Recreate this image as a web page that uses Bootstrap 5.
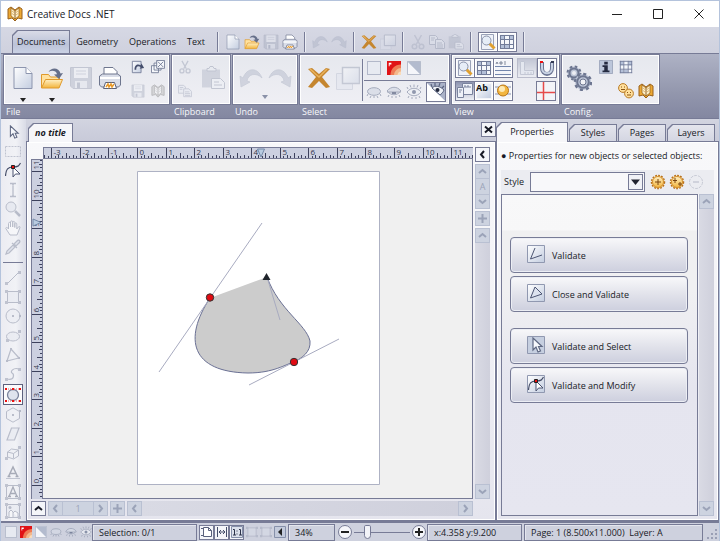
<!DOCTYPE html>
<html lang="en">
<head>
<meta charset="utf-8">
<meta name="viewport" content="width=device-width, initial-scale=1">
<title>Creative Docs .NET</title>
<link rel="stylesheet" href="https://cdn.jsdelivr.net/npm/bootstrap@5.3.0/dist/css/bootstrap.min.css">
<style>
:root{--ink:#777b96;--dark:#5d617d;--pane:#d1d3e0;--paper:#f5f5f8;--soft:#ebecf1}
body{font:9px/14px "Open Sans","Noto Sans",sans-serif;color:#181a26;background:var(--pane)}
.app{min-height:100vh;height:100vh;border-left:1px solid #b4c3dc;border-top:1px solid #b4c3dc;border-right:1px solid #b4c3dc}
svg{display:block;flex:none}
button{font:inherit;color:inherit;padding:0;border:0;background:none;display:flex;align-items:center;justify-content:center;flex:none}
.titlebar{height:26px;background:#fff;padding:0 15px 0 6px}
.titlebar h1{font-size:10px;line-height:16px}
.menubar{height:26px;background:linear-gradient(#d6d8e4,#cfd1de);padding-left:11px;padding-top:3px}
.menubar .menu-tab{height:23px;padding:0 5px;margin-right:1px}
.ctab{position:relative;isolation:isolate;display:flex;align-items:center;justify-content:center;color:inherit;text-decoration:none}
.ctab::before,.ctab::after{content:"";position:absolute;z-index:-1;clip-path:polygon(5px 0,100% 0,100% 100%,0 100%,0 5px)}
.ctab::before{inset:0;background:var(--ink)}
.ctab::after{inset:1px 1px 0 1px;background:var(--fill,#dfe0e9)}
.plain{color:inherit;text-decoration:none;display:flex;align-items:center;justify-content:center}
.vsep{width:2px;height:20px;background:linear-gradient(90deg,var(--ink) 50%,#eceef4 50%);flex:none;margin:0 6px}
.run{display:flex;align-items:center;gap:3px}
.i14{width:14px;height:14px}.i16{width:16px;height:16px}.i24{width:24px;height:24px}.i12{width:12px;height:12px}
.off{opacity:.28}
.faint{opacity:.4}
.mid{opacity:.75}
.box{width:20px;height:20px;border:1px solid var(--ink);background:#f4f5f9;box-shadow:inset 0 0 0 1px #fff}
.box.on{background:linear-gradient(#8d94b0,#eef0f6);box-shadow:none}
.box+.box{margin-left:-1px}
.ribbon{height:66px;background:linear-gradient(#aeb2c5,#9397ad 60%,#8387a1);border-top:1px solid var(--ink);border-bottom:1px solid var(--ink);padding:0 0 0 2px;gap:1px}
.group-body{height:51px;border:1px solid var(--ink);outline:1px solid #fff;outline-offset:-2px;background:linear-gradient(#e6e8ee,#efeff4)}
.group-name{color:#f6f7fa;line-height:13px;padding-left:3px}
.big{width:29px;height:46px;flex-direction:column;padding-top:11px;justify-content:flex-start}
.rule{border-top:1px solid var(--ink)}
.tools{width:25px;background:linear-gradient(90deg,#ececf2,#f1f2f6 60%,#d9dbe6);padding-top:3px}
.tools button{flex:1 1 0;min-height:0;width:20px;margin-left:2px}
.tools .on{border:1px solid var(--dark);background:#fbfbfd}
.tools hr{margin:5px 0 5px 2px;width:20px;height:1px;border:0;background:var(--ink);opacity:1}
.tabrow{height:22px;background:linear-gradient(#d2d4e0,#c8cad9)}
.pane{background:linear-gradient(#f8f8fa,#f3f3f7 40%,#e5e5ee);border:1px solid var(--ink);box-shadow:inset 0 0 0 1px #fff}
.doc-tab{width:45px;height:19px;font-weight:700;font-style:italic;--fill:#f6f6f9;margin-bottom:-1px;z-index:1}
.side-tab{width:48px;height:17px;--fill:linear-gradient(#e4e5ed,#d4d6e2)}
.side-tab.on{width:72px;height:20px;--fill:#f6f6f9;margin-bottom:-1px;z-index:1}
.sq{width:15px;height:15px;border:1px solid var(--ink);background:#f4f5f9}
.sb{width:15px;height:15px;border:1px solid #b9c0d2;background:#cdd3e0;color:#9ba3b8}
.track{background:linear-gradient(90deg,#d9dae4,#cfd0dc)}
.ruler{background:#ccd0e0;border:1px solid var(--ink);min-width:0;min-height:0}
.ruler text{font:8px "Open Sans","Noto Sans",sans-serif;fill:#34374c}
.canvas{background:#f0f0f0;border-right:1px solid var(--ink);border-bottom:1px solid var(--ink);min-height:0;min-width:0}
.side{width:223px}
.stylebar{background:#ebecf1;height:24px;padding-left:3px}
.stylebar select{width:115px;height:20px;min-height:0;padding:0 20px 0 4px;margin-right:2px;font-size:9px;line-height:14px;border:1px solid var(--ink);border-radius:0;background:#f8f8fa url("data:image/svg+xml,%3Csvg xmlns='http://www.w3.org/2000/svg' viewBox='0 0 15 16'%3E%3Crect x='.5' y='.5' width='14' height='15' fill='%23f0f1f6' stroke='%23777b96'/%3E%3Cpath d='M3 5.500h9L7.500 11z' fill='%2320222e'/%3E%3C/svg%3E") no-repeat right 1px center/15px 16px;appearance:none}
.stylebar button{margin-left:3px}
.list{border:1px solid var(--ink);background:linear-gradient(#f8f8f9 0,#f7f7f8 35px,#f0f0f1 36px,#f0f0f2 30%,#e5e5ef 60%,#e6e6f0);padding:42px 9px 0 8px}
.action{height:36px;width:100%;justify-content:flex-start;padding-left:16px;gap:7px;border:1px solid var(--ink);border-radius:4px;background:linear-gradient(#f8f8fa,#e2e3eb 50%,#cdcfde);box-shadow:inset 0 0 0 1px #eceef4;margin-bottom:3px;padding-top:2px}
.action svg{width:18px;height:18px;margin-bottom:4px}
.status{height:20px;border-top:2px solid var(--ink);background:#ced1de;padding-left:2px}
.field{border:1px solid var(--ink);height:17px;padding-left:6px;line-height:15px;box-shadow:inset 1px 1px #e4e6ee;white-space:nowrap}
.zoomer{width:56px;height:16px;appearance:none;background:linear-gradient(var(--ink),var(--ink)) center/100% 1px no-repeat;margin:0 2px}
.zoomer::-webkit-slider-thumb{appearance:none;width:7px;height:14px;border:1px solid var(--ink);border-radius:2px 2px 4px 4px;background:#f2f3f8}
</style>
<script src="https://cdn.jsdelivr.net/npm/bootstrap@5.3.0/dist/js/bootstrap.bundle.min.js"></script>
</head>
<body>
<svg width="0" height="0" class="position-absolute" aria-hidden="true">
<defs>
<linearGradient id="gp" x2="1" y2="1"><stop offset="0" stop-color="#fff"/><stop offset="1" stop-color="#c3cde0"/></linearGradient>
<linearGradient id="go" x2="0" y2="1"><stop offset="0" stop-color="#fff0c4"/><stop offset="1" stop-color="#f2b43c"/></linearGradient>
<symbol id="new" viewBox="0 0 24 24"><path d="M3 1.500h12l6 6v15H3z" fill="url(#gp)" stroke="#8c95ae"/><path d="M15 1.500v6h6" fill="#fff" stroke="#8c95ae"/></symbol>
<symbol id="open" viewBox="0 0 24 24"><path d="M1.500 22V8.500h7l2 2.500h9v3" fill="#ffe2a0" stroke="#e09a2c"/><path d="M1.500 22l4-8.500h17L19 22z" fill="url(#go)" stroke="#e09a2c"/><path d="M8.500 6C11 1 19 1 20.500 7.500l2.500-.5-4 6-5-4.500 3-.3C16 4.500 12 4 8.500 6z" fill="#66708a"/></symbol>
<symbol id="save" viewBox="0 0 24 24"><path d="M1.500 1.500h21v21H4l-2.500-2.500z" fill="#a4abbd" stroke="#8c93a8"/><path d="M5 2h14v10H5z" fill="#f0f2f7"/><path d="M7 5h10M7 8h10" stroke="#aab0c2"/><path d="M6 15h12v7H6z" fill="#dfe3ec"/><path d="M8 16.500h3V22H8z" fill="#868ea6"/></symbol>
<symbol id="print" viewBox="0 0 24 24"><path d="M6 9V1.500h9l4 4V9" fill="#fff" stroke="#6e768e"/><path d="M1.500 10l3-2h15l3 2v9l-2 2h-17l-2-2z" fill="#d9dde8" stroke="#6e768e"/><path d="M2 12h20" stroke="#fff" stroke-width="2"/><path d="M5.500 22.500l2-6h9l2 6z" fill="#fff" stroke="#5c6278"/><path d="M8 21l2-3 1 3 2-3 1 3 2-3" fill="none" stroke="#e79a2b" stroke-width="1.500"/></symbol>
<symbol id="reopen" viewBox="0 0 16 16"><path d="M1.500 1.500h10v13h-10z" fill="url(#gp)" stroke="#747d98"/><path d="M4 11c0-6 4-7 7-5l1-2 3 5-5 1 1-2C8 6.500 6 7 6 11z" fill="#454e6c"/></symbol>
<symbol id="closeall" viewBox="0 0 16 16"><g fill="#f6f8fc" stroke="#707994"><path d="M.5 6.500h8v8h-8zM3.500 3.500h8v8h-8z"/><path d="M6.500.5h9v9h-9z"/><path d="M8 2l6 6M14 2L8 8"/></g></symbol>
<symbol id="book" viewBox="0 0 16 16"><path d="M1 3l3-2 4 3 4-3 3 2v10l-4-1-3 3-3-3-4 1z" fill="#eda934" stroke="#99611c"/><path d="M4 2v8l4 3 4-3V2L8 5z" fill="#fff3cf" stroke="#9a6720" stroke-width=".8"/><path d="M8 5v8" stroke="#8a5a1c"/><path d="M5 5l2 1.500M11 5L9 6.500M5 7.500L7 9M11 7.500L9 9" stroke="#d09a45" stroke-width=".7"/></symbol>
<symbol id="scissors" viewBox="0 0 16 16"><path d="M4.500 1l5 9M11.500 1l-5 9" stroke="#8c94aa" stroke-width="1.500"/><g fill="none" stroke="#8c94aa" stroke-width="1.500"><circle cx="4.500" cy="12.500" r="2.300"/><circle cx="11.500" cy="12.500" r="2.300"/></g></symbol>
<symbol id="copy" viewBox="0 0 16 16"><g fill="#e5e9f2" stroke="#8c94aa"><path d="M.5 1.500h6l2 2v7h-8z"/><path d="M6.500 5.500h6l3 3v6h-9z"/></g><path d="M2 4h4M2 6h3M8 9h5M8 11h6M8 13h6" stroke="#8c94aa"/></symbol>
<symbol id="paste" viewBox="0 0 24 24"><path d="M1 3.500h18v18H1z" fill="#aab0c1"/><path d="M6 5V2.500h2L9 .5h3l1 2h2V5z" fill="#e7eaf1" stroke="#868ea4"/><path d="M10.500 12.500h9l4 4v6h-13z" fill="#eef1f7" stroke="#868ea4"/><path d="M13 16h5M13 19h8" stroke="#868ea4"/></symbol>
<symbol id="undo" viewBox="0 0 24 24"><path d="M1 10l1 11 9-5-3-1c1-7 9-9 15-3C19 1 8 1 4 12z" fill="#a8afc2" stroke="#8e96ac" stroke-width=".7"/></symbol>
<symbol id="redo" viewBox="0 0 24 24"><path d="M23 10l-1 11-9-5 3-1C15 8 7 6 1 12 5 1 16 1 20 12z" fill="#a8afc2" stroke="#8e96ac" stroke-width=".7"/></symbol>
<symbol id="cross" viewBox="0 0 24 24"><path d="M1 3l4-1 7 6 7-6 4 1-8 8 8 10-4 1-7-7-7 7-4-1 8-10z" fill="#c5862f"/><path d="M3 3l9 8 8-8M3 3l4 3" stroke="#e9b25c" stroke-width="1.500" fill="none"/></symbol>
<symbol id="dup" viewBox="0 0 24 24"><path d="M.5 7.500h16v16H.5z" fill="#dfe3ee" stroke="#b3bacb"/><path d="M6.500 1.500h17v16h-17z" fill="url(#gp)" stroke="#8c94aa" stroke-width="1.500"/></symbol>
<symbol id="lens" viewBox="0 0 16 16"><path d="M1.500.5h12v15h-12z" fill="#eef1f8" stroke="#9aa2b8"/><path d="M9 9l5.500 5.500" stroke="#e0a030" stroke-width="3"/><circle cx="6.500" cy="6.500" r="4.500" fill="#e6edf7" stroke="#8a93aa"/></symbol>
<symbol id="grid" viewBox="0 0 16 16"><path d="M1 1h14v14H1z" fill="#f5f7fb"/><path d="M1 1h4v5H1zM6 11h4v4H6zM11 1h4v5h-4zM1 11h4v4H1z" fill="#b4c0d8"/><path d="M1.500 1v14M5.500 1v14M10.500 1v14M14.500 1v14M1 1.500h14M1 5.500h14M1 10.500h14M1 14.500h14" stroke="#727c99"/></symbol>
<symbol id="lines" viewBox="0 0 16 16"><path d="M0 6.500h16M0 10.500h16M0 14.500h16" stroke="#7487ad"/><path d="M1 4l1-2 1 2M5 2h2v2H5zM9 2h2M9 4h2" stroke="#666e86" fill="none" stroke-width=".8"/></symbol>
<symbol id="angle" viewBox="0 0 16 16"><path d="M1.500 1.500h4v9h9v4h-13z" fill="#dfe5f0" stroke="#8b94ac"/><path d="M6 12v2M9 12v2M12 12v2" stroke="#8b94ac"/></symbol>
<symbol id="magnet" viewBox="0 0 16 16"><path d="M3 2v6c0 8 10 8 10 0V2" fill="none" stroke="#6a7391" stroke-width="4"/><path d="M3 3v5c0 7 10 7 10 0V3" fill="none" stroke="#c8d2e4" stroke-width="2"/><path d="M1 1h3v2H1z" fill="#e11"/><path d="M12 1h3v2h-3z" fill="#333a55"/></symbol>
<symbol id="pages" viewBox="0 0 16 16"><g fill="#eef1f8" stroke="#7a839e"><path d="M5.500.5h10v11h-10z"/><path d="M.5 4.500h6v10h-6z"/></g><path d="M7 4h7M8 2v2M11 2v2M2 7h3M2 9h2" stroke="#7a839e"/></symbol>
<symbol id="ab" viewBox="0 0 16 16"><path d="M1 1h14v14H1z" fill="url(#gp)"/><text x="0" y="8" font-size="9" font-weight="bold" font-family="Open Sans" fill="#111">Ab</text></symbol>
<symbol id="ball" viewBox="0 0 16 16"><path d="M0 4h16M0 11h16" stroke="#8b94ac"/><circle cx="8" cy="7.500" r="5.500" fill="#f2b640" stroke="#b97616"/><circle cx="7" cy="6" r="3" fill="#fde9b4"/></symbol>
<symbol id="redcross" viewBox="0 0 18 18"><path d="M0 0h18v18H0z" fill="#f3f4f8"/><path d="M6.500 0v18M0 10.500h18" stroke="#e64a4a" stroke-width="1.500"/></symbol>
<symbol id="blank" viewBox="0 0 16 16"><path d="M.5.5h15v15H.5z" fill="#e7eaf1" stroke="#b2b8c9" stroke-width="1.300"/></symbol>
<symbol id="redgrad" viewBox="0 0 16 16"><path d="M0 0h16v16H0z" fill="#e01216"/><path d="M4 16C4 9 9 4 16 4v12z" fill="#ef7b55"/><path d="M8 16c0-4 4-8 8-8v8z" fill="#f3b88c"/><path d="M12 16c0-2 2-4 4-4v4z" fill="#f8dcbb"/><path d="M2 2h3v2H3v2H2z" fill="#fff"/></symbol>
<symbol id="half" viewBox="0 0 16 16"><path d="M.5.5h15v15H.5z" fill="#f5f6fa" stroke="#aab1c4"/><path d="M1 1h14v14z" fill="#b3bbce"/></symbol>
<symbol id="eye0" viewBox="0 0 16 16"><ellipse cx="8" cy="7.500" rx="6.500" ry="3.800" fill="#d5dae5" stroke="#8c94aa"/><path d="M2 10l-1 2M5 12l-1 2M8 12v2M11 12l1 2M14 10l1 2" stroke="#8c94aa"/></symbol>
<symbol id="eye1" viewBox="0 0 16 16"><path d="M1 7c4-5 10-5 14 0-4 5-10 5-14 0z" fill="#d5dae5" stroke="#8c94aa"/><path d="M1 8h14" stroke="#8c94aa"/><path d="M6 8h4v2H6z" fill="#606a86"/><path d="M3 11l-1 2M6 12v2M10 12v2M13 11l1 2" stroke="#8c94aa"/></symbol>
<symbol id="eye2" viewBox="0 0 16 16"><path d="M1 8c4-5 10-5 14 0-4 5-10 5-14 0z" fill="#eef0f5" stroke="#8c94aa"/><circle cx="8" cy="8" r="2" fill="#737d98"/><path d="M2 5L1 3M5 3.500L4 1M8 3V.5M11 3.500L12 1M14 5l1-2M3 12l-1 2M6 13v2M10 13v2M13 12l1 2" stroke="#8c94aa"/></symbol>
<symbol id="eyehalf" viewBox="0 0 18 18"><path d="M0 0h18v18z" fill="#aab2c8"/><path d="M0 0v18h18z" fill="#fff"/><path d="M5 5c3-3 8-2 12 2-1 3-3 4-4 5z" fill="#eef1f7" stroke="#5b6480"/><circle cx="10.500" cy="7" r="2" fill="#242a3e"/><path d="M5 4L4 1M8 3V0M12 3l1-3M15 5l2-2" stroke="#5b6480" stroke-width="1.200"/></symbol>
<symbol id="gears" viewBox="0 0 26 26"><g fill="#bcc4d6" stroke="#6d7690"><circle cx="8" cy="8" r="6.500" stroke-width="2" stroke-dasharray="2.600 2.500"/><circle cx="8" cy="8" r="4.500" stroke-width="2"/><circle cx="17" cy="17" r="8" stroke-width="2.500" stroke-dasharray="3 3.280"/><circle cx="17" cy="17" r="5.800" stroke-width="2"/></g><circle cx="8" cy="8" r="2" fill="#eceef4"/><circle cx="17" cy="17" r="3" fill="#f1f2f6" stroke="#6d7690"/></symbol>
<symbol id="info" viewBox="0 0 16 16"><path d="M.5.5h15v15H.5z" fill="#bcc6da" stroke="#99a2b9"/><path d="M6 2h4v3H6zM4 6h6v6h2v2H4v-2h2V8H4z" fill="#242a40"/></symbol>
<symbol id="faces" viewBox="0 0 16 16"><g fill="#ffdf9c" stroke="#b97a24"><circle cx="5" cy="5" r="4.400"/><circle cx="11" cy="10.500" r="4.400"/></g><path d="M3 4h1M6 4h1M3 6.500h4M9 9.500h1M12 9.500h1M9 12h4" stroke="#8b5412"/></symbol>
<symbol id="arrow" viewBox="0 0 16 16"><path d="M5 1v12l3-3 2 5 2.500-1-2-4.500H14z" fill="#f6f8fc" stroke="#5f6882" stroke-width="1.200"/></symbol>
<symbol id="marq" viewBox="0 0 16 16"><path d="M.5 3.500h15v10H.5z" fill="none" stroke="#7c849c" stroke-dasharray="2 1"/></symbol>
<symbol id="edit" viewBox="0 0 16 16"><path d="M.5 14C1 7 3 5 8 5s6-1 7.500-4" fill="none" stroke="#454d68" stroke-width="1.200"/><path d="M8 5v10l2.500-3H15z" fill="#fff" stroke="#4a5270"/><path d="M6.500 3.500h3v3h-3z" fill="#e11" stroke="#222"/></symbol>
<symbol id="ibeam" viewBox="0 0 16 16"><path d="M5 1.500h2.500L8 3l.5-1.500H11M5 14.500h2.500L8 13l.5 1.500H11M8 2v12" fill="none" stroke="#68718b" stroke-width="1.300"/></symbol>
<symbol id="zoomt" viewBox="0 0 16 16"><circle cx="6" cy="6" r="5" fill="#dce1ec" stroke="#68718b"/><path d="M10 10l5 5" stroke="#68718b" stroke-width="2.500"/></symbol>
<symbol id="hand" viewBox="0 0 16 16"><path d="M5 15L.8 8.500c0-1.500 1.500-1.500 2.700.5V3.500c0-1.500 2-1.500 2 0V7 2c0-1.500 2.200-1.500 2.200 0v5-4.500c0-1.500 2.100-1.500 2.100 0V7.500 4c0-1.500 2-1.500 2 0v5l1.500-2c1-1 2.200-.5 1.500 1L12 15z" fill="#fff" stroke="#68718b"/></symbol>
<symbol id="drop" viewBox="0 0 16 16"><path d="M1 15l1-3 6-6 2 2-6 6zM7 4l5 5M9 5l3-3c2-2 4 0 2 2l-3 3z" fill="#c9d0df" stroke="#68718b" stroke-width="1.200"/></symbol>
<symbol id="line" viewBox="0 0 16 16"><path d="M2 14L14 2" stroke="#68718b"/><path d="M0 12h3v3H0zM13 1h3v3h-3z" fill="#7c849c"/></symbol>
<symbol id="rect" viewBox="0 0 16 16"><path d="M2.500 2.500h11v11h-11z" fill="#e3e7f0" stroke="#68718b"/><path d="M0 1h3v3H0zM13 1h3v3h-3zM0 12h3v3H0zM13 12h3v3h-3z" fill="#7c849c"/></symbol>
<symbol id="circ" viewBox="0 0 16 16"><circle cx="8" cy="8" r="7" fill="#e9ecf3" stroke="#68718b"/><path d="M7 7h2v2H7zM14 7h2v2h-2z" fill="#68718b"/></symbol>
<symbol id="ell" viewBox="0 0 16 16"><ellipse cx="8" cy="8.500" rx="6.500" ry="4.500" fill="#e3e7f0" stroke="#68718b"/><path d="M1 11h3v3H1zM13 2h3v3h-3z" fill="#7c849c"/></symbol>
<symbol id="tri" viewBox="0 0 16 16"><path d="M6 2L2 14l12-3z" fill="#eef0f5" stroke="#68718b" stroke-width="1.200"/><path d="M5 1h2v2H5zM1 13h2v2H1zM13 10h2v2h-2z" fill="#68718b"/></symbol>
<symbol id="curve" viewBox="0 0 16 16"><path d="M2 13c8 2 7-5 5-6S8 1 14 3" fill="none" stroke="#68718b" stroke-width="1.200"/><path d="M0 12h3v3H0zM13 2h3v3h-3z" fill="#7c849c"/></symbol>
<symbol id="ellred" viewBox="0 0 16 16"><circle cx="8" cy="8" r="5.500" fill="#dfe4ee" stroke="#7a839c" stroke-width="1.300"/><path d="M1 2h14M1 14h14" stroke="#d66" stroke-dasharray="1 1"/><path d="M0 1h2v2H0zM7 1h2v2H7zM14 1h2v2h-2zM0 13h2v2H0zM7 13h2v2H7zM14 13h2v2h-2z" fill="#e11"/></symbol>
<symbol id="hex" viewBox="0 0 16 16"><path d="M8 .8l6.500 3.700v7L8 15.200l-6.500-3.700v-7z" fill="#eef0f5" stroke="#68718b"/><path d="M7 7h2v2H7zM14 3h2v2h-2z" fill="#68718b"/></symbol>
<symbol id="para" viewBox="0 0 16 16"><path d="M2 14L6.500 2H14L9.500 14z" fill="#e3e7f0" stroke="#68718b" stroke-width="1.200"/></symbol>
<symbol id="cube" viewBox="0 0 16 16"><path d="M2.500 7l4-3 7 1v6l-5 3-6-2zM2.500 7l6 1.500v5M8.500 8.500l5-3.500" fill="#eef0f5" stroke="#68718b"/><path d="M0 12h3v3H0zM13 1h3v3h-3z" fill="#7c849c"/></symbol>
<symbol id="atext" viewBox="0 0 16 16"><path d="M3.500 11.500L8 2l4.500 9.500M5 8.500h6M2.500 11.500h3M10.500 11.500h3" fill="none" stroke="#3d455e" stroke-width="1.500"/><path d="M1 13.500h14" stroke="#7c849c"/></symbol>
<symbol id="abox" viewBox="0 0 16 16"><path d="M1.500 1.500h13v13h-13z" fill="none" stroke="#68718b"/><path d="M4 12.500L8 3l4 9.500M5 9.500h6M3 12.500h3M10 12.500h3" fill="none" stroke="#3d455e" stroke-width="1.300"/><path d="M0 0h3v3H0zM13 0h3v3h-3zM0 13h3v3H0zM13 13h3v3h-3z" fill="#7c849c"/></symbol>
<symbol id="img" viewBox="0 0 16 16"><path d="M1.500 1.500h13v13h-13z" fill="#e3e7f0" stroke="#68718b"/><path d="M4 14V9l2-2 2 2v5M8 10l2-2 3 2v4" fill="#fff" stroke="#68718b"/><circle cx="5" cy="4.500" r="1.500" fill="#68718b"/><path d="M0 0h3v3H0zM13 0h3v3h-3zM0 13h3v3H0zM13 13h3v3h-3z" fill="#7c849c"/></symbol>
<symbol id="up" viewBox="0 0 9 9"><path d="M1 6l3.500-3L8 6" fill="none" stroke="currentColor" stroke-width="2"/></symbol>
<symbol id="down" viewBox="0 0 9 9"><path d="M1 3l3.500 3L8 3" fill="none" stroke="currentColor" stroke-width="2"/></symbol>
<symbol id="left" viewBox="0 0 9 9"><path d="M6 1L3 4.500 6 8" fill="none" stroke="currentColor" stroke-width="2"/></symbol>
<symbol id="right" viewBox="0 0 9 9"><path d="M3 1l3 3.500L3 8" fill="none" stroke="currentColor" stroke-width="2"/></symbol>
<symbol id="plus" viewBox="0 0 9 9"><path d="M4.500 0v9M0 4.500h9" stroke="currentColor" stroke-width="2"/></symbol>
<symbol id="x" viewBox="0 0 9 9"><path d="M1 1.500l7 6M8 1.500l-7 6" stroke="currentColor" stroke-width="2"/></symbol>
<symbol id="cog" viewBox="0 0 16 16"><circle cx="8" cy="8" r="6.500" fill="#ffe3a0" stroke="#b8701c" stroke-width="1.500" stroke-dasharray="1.800 1.200"/><circle cx="8" cy="8" r="5.500" fill="url(#go)" stroke="#d08c2c"/></symbol>
<symbol id="fpage" viewBox="0 0 12 12"><path d="M2.500 1.500h5l3 3v6h-8z" fill="#fff" stroke="#59617c"/><path d="M7.500 1.500v3h3M0 2.500h2M0 9.500h2" fill="none" stroke="#59617c"/></symbol>
<symbol id="fwidth" viewBox="0 0 12 12"><path d="M1.500 1v10M10.500 1v10M3 6h6M3 6l2-2M3 6l2 2M9 6L7 4M9 6L7 8" stroke="#454e6a" fill="none"/></symbol>
<symbol id="onetoone" viewBox="0 0 12 12"><path d="M.5.500h11v11H.5z" fill="#dce1ec" stroke="#8690aa"/><path d="M2 3.500h1.500V9M2 9h3M8 3.500h1.500V9M8 9h3M6 4.500v1M6 7.500v1" fill="none" stroke="#2b3148"/></symbol>
</defs>
</svg>

<div class="app d-flex flex-column overflow-hidden">
  <header class="titlebar d-flex align-items-center">
    <svg class="i16"><use href="#book"/></svg>
    <h1 class="m-0 ms-1 fw-normal me-auto">Creative Docs .NET</h1>
    <div class="d-flex" style="gap:31px">
      <button aria-label="Minimize"><svg width="10" height="10"><path d="M0 5.500h10" stroke="#222"/></svg></button>
      <button aria-label="Maximize"><svg width="10" height="10"><path d="M.5.5h9v9h-9z" fill="none" stroke="#222"/></svg></button>
      <button aria-label="Close"><svg width="10" height="10"><path d="M.5.5l9 9M9.500.5l-9 9" stroke="#222"/></svg></button>
    </div>
  </header>

  <nav class="menubar d-flex align-items-center">
    <a href="#" class="ctab menu-tab" style="--fill:linear-gradient(#d9dbe7,#bcc3d8 60%,#c9d1e4)">Documents</a>
    <a href="#" class="plain menu-tab">Geometry</a>
    <a href="#" class="plain menu-tab">Operations</a>
    <a href="#" class="plain menu-tab">Text</a>
    <div class="d-flex align-items-center quick"></div>
  </nav>

  <section class="ribbon d-flex">
    <div style="width:167px">
      <div class="group-body d-flex">
        <button class="big ms-1" aria-label="New"><svg class="i24"><use href="#new"/></svg><svg width="6" height="4" class="mt-2"><path d="M0 0h6L3 4z" fill="#222"/></svg></button>
        <button class="big" aria-label="Open"><svg class="i24"><use href="#open"/></svg><svg width="6" height="4" class="mt-2"><path d="M0 0h6L3 4z" fill="#222"/></svg></button>
        <button class="big" aria-label="Save"><svg class="i24 faint"><use href="#save"/></svg></button>
        <button class="big" aria-label="Print"><svg class="i24"><use href="#print"/></svg></button>
        <div class="d-grid ms-1" style="grid-template-columns:20px 20px;grid-template-rows:24px 24px">
          <button aria-label="Reopen"><svg class="i14"><use href="#reopen"/></svg></button>
          <button aria-label="Close all"><svg class="i14"><use href="#closeall"/></svg></button>
          <button aria-label="Save as"><svg class="i14 faint"><use href="#save"/></svg></button>
          <button aria-label="Library"><svg class="i14 faint" style="filter:grayscale(1)"><use href="#book"/></svg></button>
        </div>
      </div>
      <div class="group-name">File</div>
    </div>
    <div style="width:60px">
      <div class="group-body d-flex">
        <div class="d-grid ms-1" style="grid-template-columns:18px;grid-template-rows:24px 24px">
          <button aria-label="Cut"><svg class="i14 faint"><use href="#scissors"/></svg></button>
          <button aria-label="Copy"><svg class="i14 faint"><use href="#copy"/></svg></button>
        </div>
        <button class="big ms-1" aria-label="Paste"><svg class="i24 faint"><use href="#paste"/></svg></button>
      </div>
      <div class="group-name">Clipboard</div>
    </div>
    <div style="width:66px">
      <div class="group-body d-flex justify-content-center position-relative">
        <button class="big" aria-label="Undo"><svg class="i24 faint"><use href="#undo"/></svg></button>
        <button class="big" aria-label="Redo"><svg class="i24 faint"><use href="#redo"/></svg></button>
        <svg width="6" height="4" class="position-absolute start-50 translate-middle-x" style="bottom:5px"><path d="M0 0h6L3 4z" fill="#8a91a8"/></svg>
      </div>
      <div class="group-name">Undo</div>
    </div>
    <div style="width:151px">
      <div class="group-body d-flex">
        <button class="big ms-1" aria-label="Delete"><svg class="i24"><use href="#cross"/></svg></button>
        <button class="big" aria-label="Duplicate"><svg class="i24 faint"><use href="#dup"/></svg></button>
        <div class="vsep mx-0 mt-1" style="height:42px"></div>
        <div class="d-grid" style="grid-template-columns:20px 20px 20px 22px;grid-template-rows:25px 22px">
          <button aria-label="Fill"><svg class="i14"><use href="#blank"/></svg></button>
          <button aria-label="Gradient"><svg class="i14"><use href="#redgrad"/></svg></button>
          <button aria-label="Opacity"><svg class="i14"><use href="#half"/></svg></button>
          <span></span>
          <button aria-label="Hide" class="rule"><svg class="i16 mid"><use href="#eye0"/></svg></button>
          <button aria-label="Dim" class="rule"><svg class="i16 mid"><use href="#eye1"/></svg></button>
          <button aria-label="Show" class="rule"><svg class="i16 mid"><use href="#eye2"/></svg></button>
          <div class="rule d-flex align-items-end justify-content-end"><button aria-label="Half" class="box on"><svg width="18" height="18"><use href="#eyehalf"/></svg></button></div>
        </div>
      </div>
      <div class="group-name">Select</div>
    </div>
    <div style="width:109px">
      <div class="group-body d-flex flex-column justify-content-between" style="padding:3px">
        <div class="d-flex">
          <button class="box" aria-label="Preview"><svg class="i16"><use href="#lens"/></svg></button>
          <button class="box" aria-label="Grid"><svg class="i16"><use href="#grid"/></svg></button>
          <button class="box" aria-label="Text grid"><svg class="i16"><use href="#lines"/></svg></button>
          <button class="box on ms-1 faint" aria-label="Rulers"><svg class="i16"><use href="#angle"/></svg></button>
          <button class="box ms-0" aria-label="Magnet"><svg class="i16"><use href="#magnet"/></svg></button>
        </div>
        <div class="d-flex">
          <button class="box on" aria-label="Pages"><svg class="i16"><use href="#pages"/></svg></button>
          <button class="box" aria-label="Labels"><svg class="i16"><use href="#ab"/></svg></button>
          <button class="box" aria-label="Aggregate"><svg class="i16"><use href="#ball"/></svg></button>
          <button class="box ms-auto" aria-label="Guides"><svg width="18" height="18"><use href="#redcross"/></svg></button>
        </div>
      </div>
      <div class="group-name">View</div>
    </div>
    <div style="width:99px">
      <div class="group-body d-flex">
        <button class="ms-1 pb-1" aria-label="Settings"><svg width="26" height="26"><use href="#gears"/></svg></button>
        <div class="d-grid ms-1" style="grid-template-columns:20px 20px 20px;grid-template-rows:24px 24px">
          <button aria-label="Information"><svg class="i14"><use href="#info"/></svg></button>
          <button aria-label="Table"><svg class="i14"><use href="#grid"/></svg></button><span></span><span></span>
          <button aria-label="People"><svg class="i16"><use href="#faces"/></svg></button>
          <button aria-label="Glyphs"><svg class="i16"><use href="#book"/></svg></button>
        </div>
      </div>
      <div class="group-name">Config.</div>
    </div>
  </section>

  <main class="d-flex flex-grow-1" style="min-height:0">
    <aside class="tools d-flex flex-column flex-shrink-0" id="tools"></aside>
    <section class="d-flex flex-column flex-grow-1" style="min-width:0">
      <div class="tabrow d-flex align-items-end ps-1">
        <a href="#" class="ctab doc-tab me-auto" style="margin-left:-2px">no title</a>
        <button class="sq mb-1" aria-label="Close document"><svg width="9" height="9"><use href="#x"/></svg></button>
      </div>
      <div class="pane flex-grow-1 d-grid" style="min-height:0;padding:5px 5px 4px 4px;grid-template-columns:minmax(0,1fr) 17px;grid-template-rows:minmax(0,1fr) 17px">
        <div class="d-grid" style="grid-template-columns:12px minmax(0,1fr);grid-template-rows:12px minmax(0,1fr);min-height:0">
          <span></span>
          <div class="ruler border-end-0"><svg id="hr" width="100%" height="10"></svg></div>
          <div class="ruler border-bottom-0"><svg id="vr" width="10" height="100%"></svg></div>
          <div class="canvas">
            <svg width="100%" height="100%">
              <path d="M94.500 12.500h242v313h-242z" fill="#fff" stroke="#aeb2c4"/>
              <path d="M167 139C140 180 148 213 205 214C231 214 243 205 251 203C259 199 268 193 267 182C263 165 236 151 224 118z" fill="#ccc"/>
              <path d="M167 139C140 180 148 213 205 214C231 214 243 205 251 203C259 199 268 193 267 182C263 165 236 151 224 118" fill="none" stroke="#6a7094"/>
              <path d="M219 64L116 213M206 226l90-46M224 118l13 43" fill="none" stroke="#a8abc0"/>
              <circle cx="167" cy="138.500" r="3.700" fill="#e00b12" stroke="#333"/><circle cx="251" cy="203" r="3.700" fill="#e00b12" stroke="#333"/>
              <path d="M223.500 114l4 7h-8z" fill="#20242c"/>
            </svg>
          </div>
        </div>
        <div class="d-flex flex-column align-items-end">
          <button class="sq" style="margin-bottom:2px" aria-label="Toggle panel"><svg width="9" height="9"><use href="#left"/></svg></button>
          <button class="sb" aria-label="Page up"><svg width="9" height="9"><use href="#up"/></svg></button>
          <button class="sb border-top-0 border-bottom-0">A</button>
          <button class="sb" aria-label="Page down"><svg width="9" height="9"><use href="#down"/></svg></button>
          <button class="sb" style="margin:2px 0" aria-label="Add layer"><svg width="9" height="9"><use href="#plus"/></svg></button>
          <button class="sb" aria-label="Scroll up"><svg width="9" height="9"><use href="#up"/></svg></button>
          <div class="track flex-grow-1" style="width:15px"></div>
          <button class="sb" aria-label="Scroll down"><svg width="9" height="9"><use href="#down"/></svg></button>
        </div>
        <div class="d-flex align-items-end">
          <button class="sq" aria-label="Toggle pages"><svg width="9" height="9"><use href="#up"/></svg></button>
          <button class="sb" style="margin-left:2px" aria-label="Previous page"><svg width="9" height="9"><use href="#left"/></svg></button>
          <button class="sb border-start-0 border-end-0" style="width:30px">1</button>
          <button class="sb" aria-label="Next page"><svg width="9" height="9"><use href="#right"/></svg></button>
          <button class="sb" style="margin:0 2px" aria-label="Add page"><svg width="9" height="9"><use href="#plus"/></svg></button>
          <button class="sb" aria-label="Scroll left"><svg width="9" height="9"><use href="#left"/></svg></button>
          <div class="track flex-grow-1" style="height:15px"></div>
          <button class="sb" aria-label="Scroll right"><svg width="9" height="9"><use href="#right"/></svg></button>
        </div>
      </div>
    </section>

    <section class="side d-flex flex-column flex-shrink-0">
      <div class="tabrow d-flex align-items-end" style="gap:1px">
        <a href="#" class="ctab side-tab on">Properties</a>
        <a href="#" class="ctab side-tab">Styles</a>
        <a href="#" class="ctab side-tab">Pages</a>
        <a href="#" class="ctab side-tab">Layers</a>
      </div>
      <div class="pane flex-grow-1 d-flex flex-column" style="min-height:0;padding:7px 4px 4px 4px">
        <div class="text-nowrap" style="margin-bottom:7px"><span aria-hidden="true">●</span> Properties for new objects or selected objects:</div>
        <div class="stylebar d-flex align-items-center">
          <label for="style" class="me-1" style="width:22px">Style</label>
          <select id="style" class="form-select flex-shrink-0"><option></option></select>
          <button aria-label="New style"><svg class="i16"><use href="#cog"/><path d="M8 5v6M5 8h6" stroke="#7a4410"/></svg></button>
          <button aria-label="Free style"><svg class="i16"><use href="#cog"/><path d="M6 4v5M4 6.500h4M11 8v4M9 10h4" stroke="#7a4410"/></svg></button>
          <button aria-label="Remove style"><svg class="i16 off" viewBox="0 0 16 16"><circle cx="8" cy="8" r="6.500" fill="none" stroke="#68718b" stroke-dasharray="3 1"/><path d="M5 8h6" stroke="#68718b" stroke-width="1.500"/></svg></button>
        </div>
        <div class="d-flex flex-grow-1" style="min-height:0">
          <div class="list flex-grow-1">
            <button class="action"><svg viewBox="0 0 18 18"><path d="M.5.5h17v17H.5z" fill="url(#gp)" stroke="#9098b0"/><path d="M8 3L3.500 14 15 10" fill="none" stroke="#4c5573"/></svg>Validate</button>
            <button class="action"><svg viewBox="0 0 18 18"><path d="M.5.5h17v17H.5z" fill="url(#gp)" stroke="#9098b0"/><path d="M8 3L3.500 14 15 10z" fill="#dde3ef" stroke="#4c5573"/></svg>Close and Validate</button>
            <button class="action mt-3"><svg viewBox="0 0 18 18"><path d="M.5.5h17v17H.5z" fill="#c6cfe0" stroke="#9098b0"/><use href="#arrow" x="1" y="1" width="16" height="16"/></svg>Validate and Select</button>
            <button class="action"><svg viewBox="0 0 18 18"><path d="M.5.5h17v17H.5z" fill="url(#gp)" stroke="#9098b0"/><use href="#edit" x="1" y="1" width="16" height="16"/></svg>Validate and Modify</button>
          </div>
          <div class="d-flex flex-column" style="margin-left:1px">
            <button class="sb" aria-label="Scroll up"><svg width="9" height="9"><use href="#up"/></svg></button>
            <div class="track flex-grow-1"></div>
            <button class="sb" aria-label="Scroll down"><svg width="9" height="9"><use href="#down"/></svg></button>
          </div>
        </div>
      </div>
    </section>
  </main>

  <footer class="status d-flex align-items-center">
    <div class="d-flex" style="gap:3px;width:89px;padding-left:2px">
      <button aria-label="Fill"><svg class="i12"><use href="#blank"/></svg></button>
      <button aria-label="Gradient"><svg class="i12"><use href="#redgrad"/></svg></button>
      <button aria-label="Opacity"><svg class="i12"><use href="#half"/></svg></button>
      <button aria-label="Hide"><svg class="i12 mid"><use href="#eye0"/></svg></button>
      <button aria-label="Dim"><svg class="i12 mid"><use href="#eye1"/></svg></button>
      <button aria-label="Show"><svg class="i12 mid"><use href="#eye2"/></svg></button>
    </div>
    <div class="field" style="width:105px">Selection: 0/1</div>
    <div class="d-flex align-items-center" style="margin:0 2px">
      <button class="sq" aria-label="Fit page"><svg class="i12"><use href="#fpage"/></svg></button>
      <button class="sq" aria-label="Fit width"><svg class="i12"><use href="#fwidth"/></svg></button>
      <button class="sq" aria-label="Actual size"><svg class="i12"><use href="#onetoone"/></svg></button>
      <button style="margin-left:2px" aria-label="Zoom selection"><svg class="i12 off"><use href="#rect"/></svg></button>
      <button style="margin:0 2px" aria-label="Zoom width"><svg class="i12 off"><use href="#rect"/></svg></button>
      <button aria-label="Previous zoom"><svg class="i12"><path d="M.5.5h11v11H.5z" fill="#c3cadb" stroke="#8690aa"/><path d="M8 2v8L4 6z" fill="#222"/></svg></button>
    </div>
    <div class="field" style="width:47px">34%</div>
    <button style="margin-left:3px" aria-label="Zoom out"><svg width="14" height="14"><circle cx="7" cy="7" r="6.500" fill="#f5f6fa" stroke="#777b96"/><path d="M3 7h8" stroke="#222" stroke-width="2"/></svg></button>
    <input type="range" class="zoomer" aria-label="Zoom" value="20">
    <button aria-label="Zoom in"><svg width="14" height="14"><circle cx="7" cy="7" r="6.500" fill="#f5f6fa" stroke="#777b96"/><path d="M3 7h8M7 3v8" stroke="#222" stroke-width="2"/></svg></button>
    <div class="field" style="width:95px;margin:0 2px 0 1px">x:4.358 y:9.200</div>
    <div class="field flex-grow-1">Page: 1 (8.500x11.000)&nbsp; Layer: A</div>
    <svg width="16" height="16"><path d="M12 5h2v2h-2zM8 9h2v2H8zM12 9h2v2h-2zM4 13h2v2H4zM8 13h2v2H8zM12 13h2v2h-2z" fill="#9a9fb5"/></svg>
  </footer>
</div>

<script>
const icon=(id,cls)=>`<button aria-label="${id}"><svg class="${cls}"><use href="#${id}"/></svg></button>`;
const sep='<div class="vsep"></div>';
const run=s=>`<div class="run">${s}</div>`;
document.querySelector('.quick').innerHTML=sep+
 run(icon('new','i16')+icon('open','i16')+icon('save','i16 faint')+icon('print','i16'))+sep+
 run(icon('undo','i16 faint')+icon('redo','i16 faint'))+sep+
 run(icon('cross','i16')+icon('dup','i16 faint'))+sep+
 run(icon('scissors','i16 off')+icon('copy','i16 faint')+icon('paste','i16 faint'))+sep+
 '<button class="box" aria-label="preview"><svg class="i16"><use href="#lens"/></svg></button><button class="box" aria-label="grid"><svg class="i16"><use href="#grid"/></svg></button>'+sep;
const live=['arrow','edit','ellred'];
document.getElementById('tools').innerHTML=['arrow','marq','edit','ibeam','zoomt','hand','drop','-','line','rect','circ','ell','tri','curve','ellred','hex','para','cube','atext','abox','img']
 .map(t=>t==='-'?'<hr>':`<button aria-label="${t}" class="${t==='ellred'?'on':''}"><svg class="${t==='arrow'?'i14':'i16'} ${live.includes(t)?'':'faint'}"><use href="#${t}"/></svg></button>`).join('');
const unit=28.55;
let h='',v='';
const width=document.getElementById('hr').clientWidth,height=document.getElementById('vr').clientHeight;
for(let i=-26;i<128;i++){
  const major=i%8===0,len=major?10:i%4===0?5:i%2===0?3:2;
  const x=Math.round(93+i*unit/8)+.5,y=Math.round(325-i*unit/8)+.5;
  if(x<width){
    h+=`<path d="M${x} 10V${10-len}" stroke="#3d415c"/>`;
    if(major)h+=`<text x="${x+2}" y="7">${i/8}</text>`;
  }
  if(y>0&&y<height){
    v+=`<path d="M10 ${y}H${10-len}" stroke="#3d415c"/>`;
    if(major&&y>8)v+=`<text transform="translate(7 ${y-2}) rotate(-90)">${i/8}</text>`;
  }
}
const mark='fill="#b9cbe0" stroke="#7489a8"';
document.getElementById('hr').innerHTML=h+`<path d="M213.500 1h7l-3.500 8z" ${mark}/>`;
document.getElementById('vr').innerHTML=v+`<path d="M1 59v7l8-3.500z" ${mark}/>`;
</script>
</body>
</html>
